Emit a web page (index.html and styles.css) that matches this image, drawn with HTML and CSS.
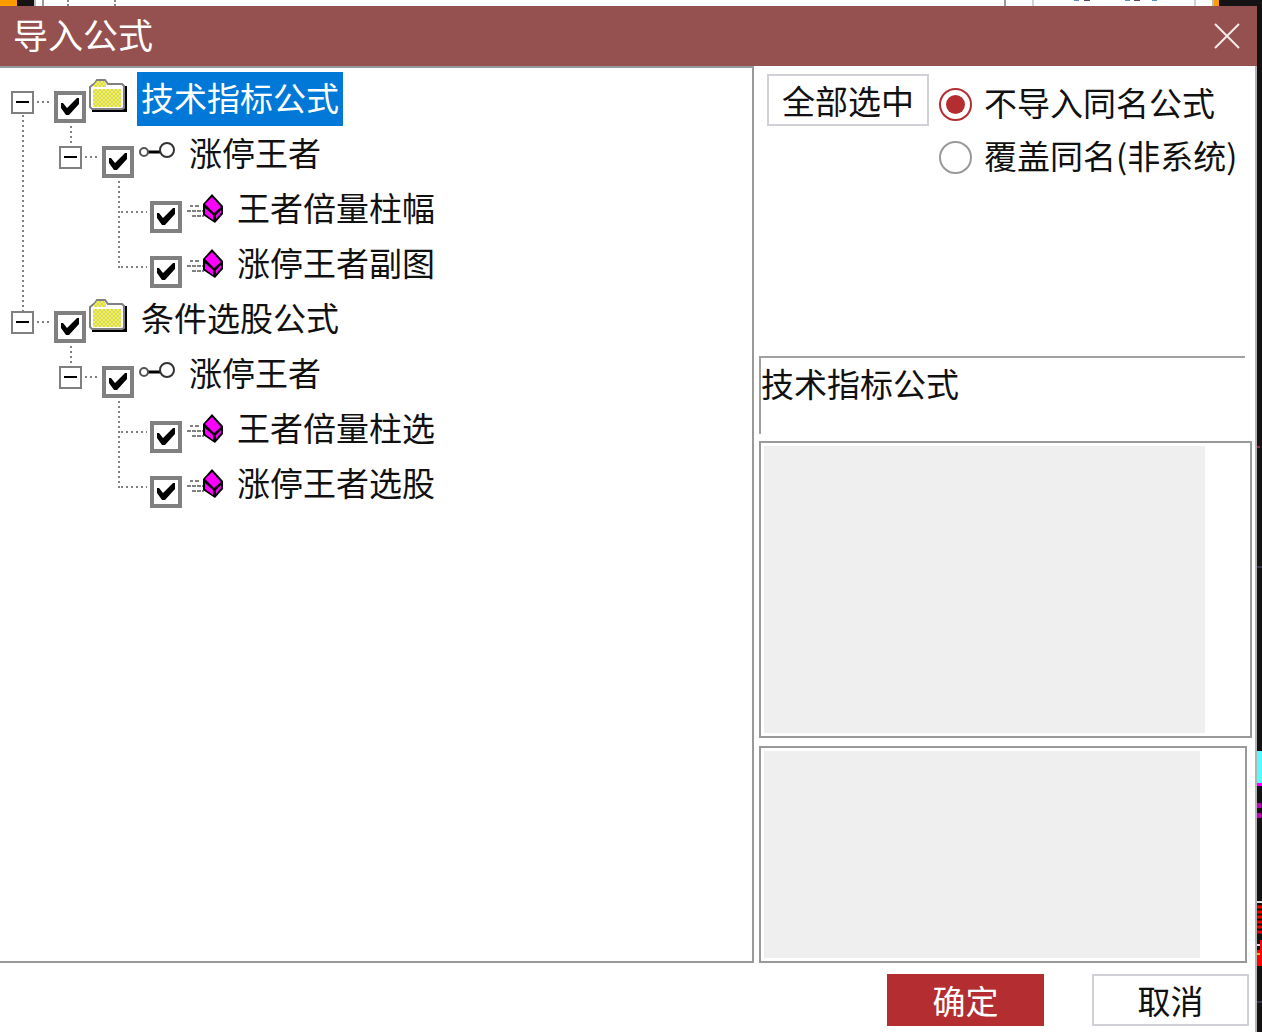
FILE: index.html
```html
<!DOCTYPE html>
<html lang="zh-CN">
<head>
    <meta charset="UTF-8">
    <meta name="viewport" content="width=device-width, initial-scale=1.0">
    <title>导入公式</title>
    <link rel="stylesheet" href="styles.css">
</head>
<body>
    <svg class="symbols" width="0" height="0" aria-hidden="true">
        <defs>
            <pattern id="dither" width="4" height="4" patternUnits="userSpaceOnUse">
                <rect width="4" height="4" fill="#f6f62c"/>
                <path d="M0 0h2v2H0zM2 2h2v2H2z" fill="#d2d28a"/>
            </pattern>
            <symbol id="folder" viewBox="0 0 38 34">
                <path d="M3 30h31V7h4v26H3z" fill="#000"/>
                <path d="M1 8L6 4L8 1H16L19 5H33L35 7V29L33 30H3L1 28Z" fill="#fff" stroke="#808080" stroke-width="2"/>
                <path d="M8 2H15L17 5V8H5V6ZM4 10H32V28H4Z" fill="url(#dither)"/>
            </symbol>
            <symbol id="key" viewBox="0 0 38 34">
                <path d="M9 18H23" stroke="#000" stroke-width="3"/>
                <circle cx="7" cy="18" r="4" fill="#fff" stroke="#555" stroke-width="2"/>
                <circle cx="30" cy="16" r="7" fill="#fff" stroke="#333" stroke-width="2"/>
            </symbol>
            <symbol id="formula" viewBox="0 0 38 34">
                <path d="M5 17h3M10 17h5M2 22h16M7 27h12" stroke="#808080" stroke-width="2" stroke-dasharray="4 1"/>
                <path d="M27 5L38 17V25L30 34L18 26V15Z" fill="#000"/>
                <path d="M27 8L36 18L29 24L20 15Z" fill="#f0f"/>
                <path d="M20 19L28 26V31L20 25ZM31 26L36 21V24L31 30Z" fill="#f0f"/>
            </symbol>
        </defs>
    </svg>

    <!-- bottom edge of the window behind -->
    <div class="behind-top">
        <svg width="120" height="6" aria-hidden="true">
            <rect width="17" height="6" fill="#ff9d00"/>
            <rect x="17" width="17" height="6" fill="#141212"/>
            <rect x="34" width="2" height="6" fill="#bbb"/>
            <rect x="42" width="2" height="6" fill="#999"/>
            <path d="M67 0h2v2h-2zM67 4h2v2h-2zM114 0h2v2h-2zM114 4h2v2h-2z" fill="#888"/>
        </svg>
        <svg width="262" height="6" aria-hidden="true">
            <rect x="4" width="2" height="6" fill="#999"/>
            <path d="M32 0h2v6h-2zM194 0h2v6h-2z" fill="#cfd1d6"/>
            <path d="M74 0h5M125 0h5M152 0h5" stroke="#5b8ec0" stroke-width="2"/>
            <path d="M84 0h6M134 0h6" stroke="#634455" stroke-width="2"/>
            <rect x="212" width="2" height="6" fill="#bbb"/>
            <rect x="214" width="5" height="6" fill="#ff9d00"/>
            <rect x="219" width="43" height="6" fill="#141212"/>
        </svg>
    </div>

    <div class="desktop">
        <form class="dialog">
            <header class="title-bar">
                <h1>导入公式</h1>
                <button type="button" class="close" aria-label="关闭">
                    <svg width="26" height="26" viewBox="0 0 26 26" aria-hidden="true">
                        <path d="M1 1L25 25M25 1L1 25" stroke="#f3eaea" stroke-width="2"/>
                    </svg>
                </button>
            </header>

            <div class="content">
                <ul class="tree">
                    <li>
                        <div class="row">
                            <button type="button" class="toggle" aria-label="折叠"></button>
                            <span class="dots"></span>
                            <input type="checkbox" id="f1" checked>
                            <svg class="icon" aria-hidden="true"><use href="#folder"/></svg>
                            <label for="f1" class="selected">技术指标公式</label>
                        </div>
                        <ul>
                            <li>
                                <div class="row">
                                    <button type="button" class="toggle" aria-label="折叠"></button>
                                    <span class="dots"></span>
                                    <input type="checkbox" id="f2" checked>
                                    <svg class="icon" aria-hidden="true"><use href="#key"/></svg>
                                    <label for="f2">涨停王者</label>
                                </div>
                                <ul>
                                    <li>
                                        <div class="row leaf">
                                            <span class="dots"></span>
                                            <input type="checkbox" id="f3" checked>
                                            <svg class="icon" aria-hidden="true"><use href="#formula"/></svg>
                                            <label for="f3">王者倍量柱幅</label>
                                        </div>
                                    </li>
                                    <li>
                                        <div class="row leaf">
                                            <span class="dots"></span>
                                            <input type="checkbox" id="f4" checked>
                                            <svg class="icon" aria-hidden="true"><use href="#formula"/></svg>
                                            <label for="f4">涨停王者副图</label>
                                        </div>
                                    </li>
                                </ul>
                            </li>
                        </ul>
                    </li>
                    <li>
                        <div class="row">
                            <button type="button" class="toggle" aria-label="折叠"></button>
                            <span class="dots"></span>
                            <input type="checkbox" id="f5" checked>
                            <svg class="icon" aria-hidden="true"><use href="#folder"/></svg>
                            <label for="f5">条件选股公式</label>
                        </div>
                        <ul>
                            <li>
                                <div class="row">
                                    <button type="button" class="toggle" aria-label="折叠"></button>
                                    <span class="dots"></span>
                                    <input type="checkbox" id="f6" checked>
                                    <svg class="icon" aria-hidden="true"><use href="#key"/></svg>
                                    <label for="f6">涨停王者</label>
                                </div>
                                <ul>
                                    <li>
                                        <div class="row leaf">
                                            <span class="dots"></span>
                                            <input type="checkbox" id="f7" checked>
                                            <svg class="icon" aria-hidden="true"><use href="#formula"/></svg>
                                            <label for="f7">王者倍量柱选</label>
                                        </div>
                                    </li>
                                    <li>
                                        <div class="row leaf">
                                            <span class="dots"></span>
                                            <input type="checkbox" id="f8" checked>
                                            <svg class="icon" aria-hidden="true"><use href="#formula"/></svg>
                                            <label for="f8">涨停王者选股</label>
                                        </div>
                                    </li>
                                </ul>
                            </li>
                        </ul>
                    </li>
                </ul>

                <div class="side">
                    <div class="options">
                        <button type="button" class="btn">全部选中</button>
                        <div class="radios">
                            <label><input type="radio" name="mode" checked><span>不导入同名公式</span></label>
                            <label><input type="radio" name="mode"><span>覆盖同名(非系统)</span></label>
                        </div>
                    </div>
                    <p class="info">技术指标公式</p>
                    <textarea class="detail" aria-label="公式说明" readonly></textarea>
                    <textarea class="detail notes" aria-label="公式注释" readonly></textarea>
                </div>
            </div>

            <footer class="actions">
                <button type="button" class="btn primary">确定</button>
                <button type="button" class="btn">取消</button>
            </footer>
        </form>

        <!-- chart window showing past the right edge -->
        <svg class="behind-right" width="5" height="1026" aria-hidden="true">
            <rect y="440" width="3" height="2" fill="#a0205a"/>
            <path d="M0 561h5M0 996h5" stroke="#34344a" stroke-width="2"/>
            <rect y="745" width="5" height="32" fill="#54fcfc"/>
            <rect y="777" width="5" height="3" fill="#f0f"/>
            <path d="M0 797h4v5H0zM0 807h4v5H0z" fill="#c000c0"/>
            <rect y="895" width="5" height="2" fill="#ddd"/>
            <path d="M0 901h5M0 906h5M0 911h5M0 916h5M0 921h5M0 926h5" stroke="#e00" stroke-width="3"/>
            <path d="M3 934h2v26H0v-16h3z" fill="#f00"/>
            <rect y="938" width="3" height="2" fill="#ddd"/>
            <rect y="947" width="3" height="2" fill="#e8c000"/>
        </svg>
    </div>
</body>
</html>
```

FILE: styles.css
```css
* {
    box-sizing: border-box;
}

body {
    margin: 0;
    min-height: 100vh;
    display: flex;
    flex-direction: column;
    background: #141212;
    color: #111;
    font-family: "Noto Sans CJK SC", sans-serif;
    font-size: 33px;
    line-height: 50px;
}

button,
input,
textarea {
    font: inherit;
    color: inherit;
    margin: 0;
}

ul {
    list-style: none;
    margin: 0;
    padding: 0;
}

.symbols {
    position: absolute;
}

.behind-top {
    display: flex;
    justify-content: space-between;
    height: 6px;
    background: #fff;
}

.desktop {
    flex: 1;
    display: flex;
}

.behind-right {
    flex: none;
}

.dialog {
    flex: 1;
    display: flex;
    flex-direction: column;
    background: #fff;
}

.title-bar {
    display: flex;
    justify-content: space-between;
    align-items: center;
    height: 60px;
    padding: 0 17px 0 13px;
    background: #955050;
    color: #fff;
}

.title-bar h1 {
    margin: 0;
    padding-bottom: 4px;
    font-size: 35px;
    font-weight: 400;
}

.close {
    display: flex;
    padding: 0;
    border: none;
    background: none;
    cursor: pointer;
}

.content {
    flex: 1;
    display: flex;
    border-right: 2px solid #b4b4b4;
}

/* tree */
.tree {
    flex: 1;
    padding-top: 3px;
    border: 2px solid #999;
    border-left: none;
}

.tree ul {
    padding-left: 48px;
}

.tree li {
    position: relative;
}

.tree li::before {
    content: "";
    position: absolute;
    left: 22px;
    width: 2px;
    background: repeating-linear-gradient(#808080 0 2px, transparent 2px 5px);
}

/* line from the first root down to the next one */
.tree > li:first-child::before {
    top: 44px;
    bottom: -20px;
}

/* short line from a folder down to its group */
.tree > li > ul > li::before {
    top: 0;
    height: 20px;
}

.tree ul ul > li::before {
    top: 0;
    height: 55px;
}

.tree ul ul > li:last-child::before {
    height: 32px;
}

.row {
    display: flex;
    align-items: center;
    height: 55px;
    padding-left: 11px;
}

.row.leaf {
    padding-left: 22px;
}

.toggle {
    width: 23px;
    height: 23px;
    margin-top: 7px;
    padding: 0 3px;
    border: 2px solid #808080;
    background: #fff;
}

.toggle::before {
    content: "";
    display: block;
    height: 2px;
    background: #000;
}

.dots {
    width: 14px;
    height: 2px;
    margin: 7px 3px 0;
    background: repeating-linear-gradient(90deg, #808080 0 2px, transparent 2px 5px);
}

.leaf .dots {
    width: 26px;
}

.row input {
    appearance: none;
    width: 32px;
    height: 32px;
    margin-top: 17px;
    border: 4px solid #808080;
    background: #fff;
}

.row input:checked::before {
    content: "";
    display: block;
    width: 24px;
    height: 24px;
    background: #000;
    clip-path: polygon(3px 8px, 5px 8px, 9px 13px, 19px 3px, 21px 3px, 21px 9px, 11px 20px, 8px 20px, 3px 13px);
}

.icon {
    width: 38px;
    height: 34px;
    margin: 0 10px 6px 3px;
}

.row label {
    height: 54px;
    padding: 0 4px;
}

.row label.selected {
    background: #0078d7;
    color: #fff;
}

/* right side */
.side {
    width: 501px;
    display: flex;
    flex-direction: column;
    padding-left: 5px;
}

.options {
    flex: 1;
    display: flex;
    align-items: flex-start;
    gap: 10px;
    padding: 8px 0 0 8px;
}

.btn {
    height: 52px;
    padding: 0 13px;
    border: 2px solid #cfd1d6;
    background: #fff;
    line-height: 48px;
    white-space: nowrap;
    cursor: pointer;
}

.radios {
    padding-top: 4px;
}

.radios label {
    display: flex;
    align-items: center;
    gap: 12px;
    height: 53px;
    white-space: nowrap;
}

.radios span {
    padding-bottom: 6px;
}

.radios input {
    appearance: none;
    width: 33px;
    height: 33px;
    padding: 5px;
    border: 2px solid #999;
    border-radius: 50%;
}

.radios input:checked {
    border-color: #b42d31;
    background: #b42d31 content-box;
}

.info {
    height: 78px;
    margin: 0 10px 7px 0;
    border: 2px solid #a0a0a0;
    border-width: 2px 0 0 2px;
}

/* the white strip on the right is the empty scroll track */
.detail {
    height: 297px;
    margin: 0 3px 8px 0;
    padding: 3px 45px 3px 3px;
    border: 2px solid #999;
    background: #efefef content-box;
    resize: none;
    outline: none;
}

.detail.notes {
    height: 217px;
    margin: 0 8px 0 0;
}

.actions {
    display: flex;
    justify-content: flex-end;
    gap: 48px;
    height: 69px;
    padding: 11px 6px 0 0;
    border-right: 2px solid #b4b4b4;
}

.actions .btn {
    width: 157px;
}

.btn.primary {
    border-color: #b42d31;
    background: #b42d31;
    color: #fff;
}
```
